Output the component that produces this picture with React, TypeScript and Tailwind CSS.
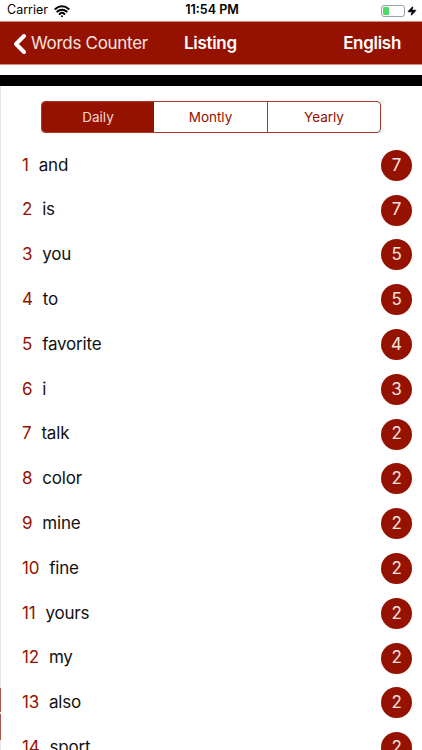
import { ChevronLeft, Wifi, Zap } from "lucide-react";

const FONT = "font-['Inter','Liberation_Sans',sans-serif]";

const words: Array<[string, number]> = [
  ["and", 7],
  ["is", 7],
  ["you", 5],
  ["to", 5],
  ["favorite", 4],
  ["i", 3],
  ["talk", 2],
  ["color", 2],
  ["mine", 2],
  ["fine", 2],
  ["yours", 2],
  ["my", 2],
  ["also", 2],
  ["sport", 2],
];

function StatusBar() {
  return (
    <div className="h-[21px] shrink-0 flex items-center pl-[7px] pr-[5px] text-[12.5px] text-black">
      <div className="flex-1 flex items-center gap-[6px]">
        <span>Carrier</span>
        <Wifi size={16} strokeWidth={3} />
      </div>
      <span className="font-semibold text-[12.5px]">11:54 PM</span>
      <div className="flex-1 flex items-center justify-end gap-[2px]">
        <div className="w-[24px] h-[12px] rounded-[3px] border border-gray-400 p-[1px]">
          <div className="w-[6px] h-full bg-[#4cd964] rounded-[1px]" />
        </div>
        <Zap size={10} fill="black" />
      </div>
    </div>
  );
}

function NavBar() {
  return (
    <div className="h-[44px] shrink-0 bg-[#951200] border-y border-[#d98a80] flex items-center text-white pl-[6px] pr-[21px] pt-[1px] text-[17px] tracking-[-0.3px]">
      <ChevronLeft size={32} strokeWidth={3} className="-mr-[5px] -ml-[2px]" />
      <span className="w-[153px] text-[#f6e4e1]">Words Counter</span>
      <span className="font-semibold flex-1">Listing</span>
      <span className="font-semibold">English</span>
    </div>
  );
}

function Segments() {
  return (
    <div className="mx-[41px] mt-[15px] h-[32px] shrink-0 flex rounded-[4px] border border-[#a8382a] text-[13.5px] overflow-hidden">
      <div className="w-[112px] bg-[#951200] text-[#f3d9d5] flex items-center justify-center">Daily</div>
      <div className="w-[114px] text-[#951200] border-r border-[#a8382a] flex items-center justify-center">Montly</div>
      <div className="flex-1 text-[#951200] flex items-center justify-center">Yearly</div>
    </div>
  );
}

function Row({ n, word, count }: { n: number; word: string; count: number }) {
  return (
    <div className="h-[44.8px] shrink-0 flex items-center pl-[22px] pr-[10px] text-[17px] tracking-[-0.2px]">
      <span className="text-[#951200] mr-[10px]">{n}</span>
      <span className="flex-1 text-[#111]">{word}</span>
      <span className="w-[31px] h-[31px] rounded-full bg-[#951200] text-[#f6e4e1] flex items-center justify-center">
        {count}
      </span>
    </div>
  );
}

export default function App() {
  return (
    <div className={`${FONT} relative w-[422px] h-[750px] overflow-hidden bg-white flex flex-col`}>
      <StatusBar />
      <NavBar />
      <div className="h-[11px] mt-[10px] bg-black shrink-0" />
      <Segments />
      <div className="mt-[10px] flex flex-col">
        {words.map(([word, count], i) => (
          <Row key={word} n={i + 1} word={word} count={count} />
        ))}
      </div>
      {/* thin edge marks on the left of the screenshot */}
      <div className="absolute left-0 top-[86px] bottom-0 w-px bg-[#e6e6e6]" />
      <div className="absolute left-0 top-[688px] h-[24px] w-px bg-[#a8554a]" />
      <div className="absolute left-0 top-[714px] h-[26px] w-px bg-[#a8554a]" />
    </div>
  );
}
